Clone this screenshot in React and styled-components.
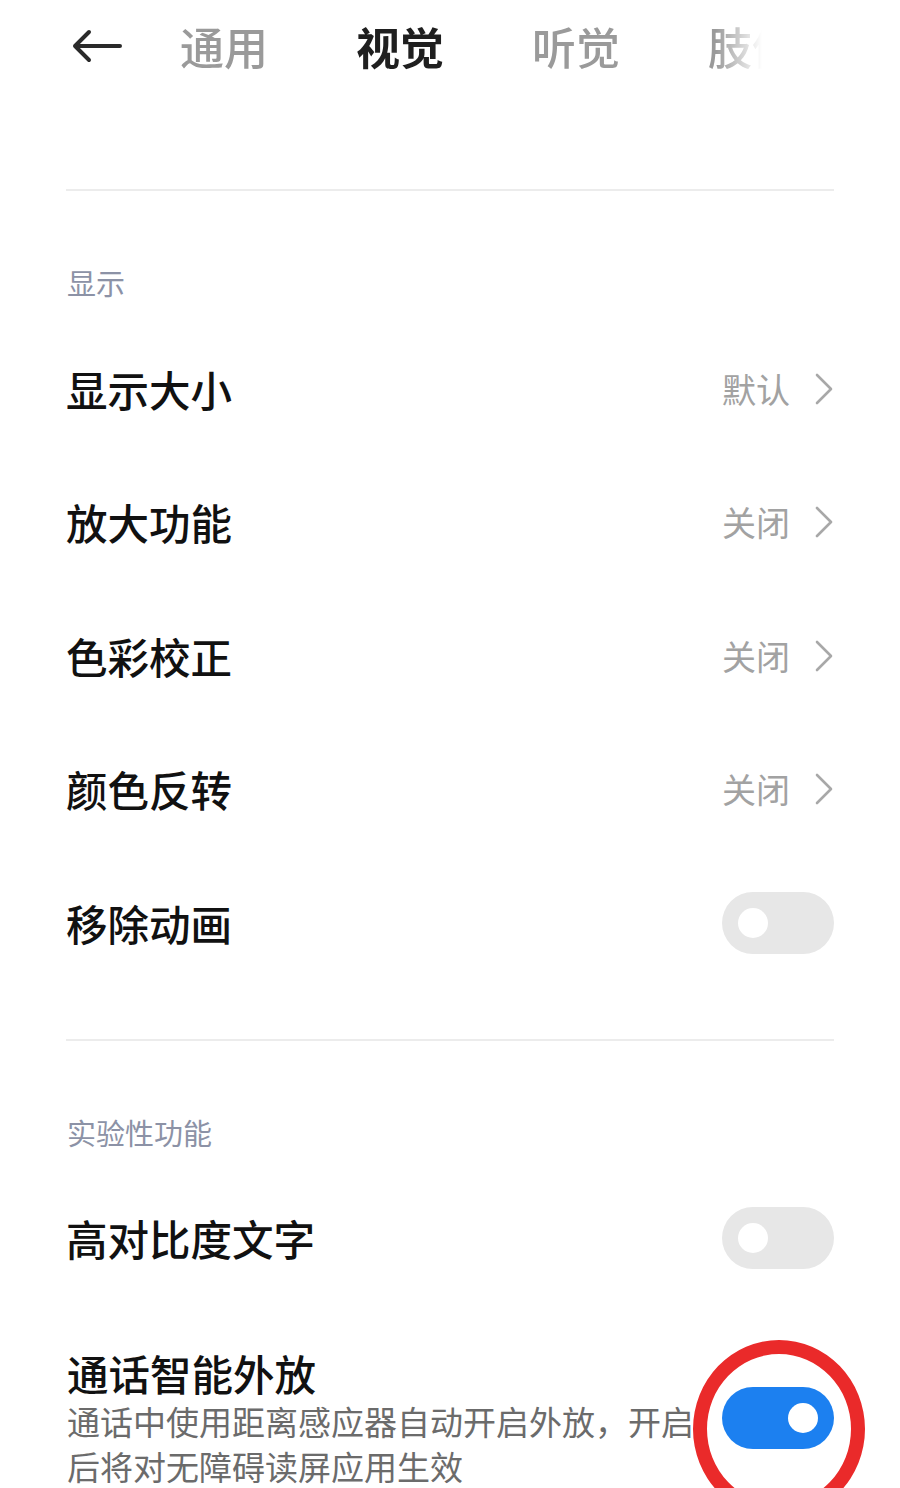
import React from 'react';
import styled, { createGlobalStyle } from 'styled-components';

const GlobalStyle = createGlobalStyle`
  html, body {
    margin: 0;
    padding: 0;
    background: #ffffff;
  }
  body {
    font-family: "Noto Sans CJK SC", "Noto Sans", sans-serif;
    color: #111;
  }
`;

const tabs = ['通用', '视觉', '听觉', '肢体'];

const displayRows = [
  { title: '显示大小', value: '默认' },
  { title: '放大功能', value: '关闭' },
  { title: '色彩校正', value: '关闭' },
  { title: '颜色反转', value: '关闭' },
  { title: '移除动画', toggle: false },
];

const Page = styled.div`
  width: 900px;
  height: 1488px;
  overflow: hidden;
  background: #fff;
`;

const Header = styled.div`
  display: flex;
  align-items: center;
  height: 92px;
  padding-left: 72px;
`;

const BackButton = styled.div`
  display: flex;
  align-items: center;
  width: 108px;
  height: 40px;
`;

const TabStrip = styled.div`
  display: flex;
  gap: 88px;
  width: 582px;
  padding: 8px 0;
  overflow: hidden;
  white-space: nowrap;
  -webkit-mask-image: linear-gradient(to right, #000 92%, transparent 100%);
  mask-image: linear-gradient(to right, #000 92%, transparent 100%);
`;

const Tab = styled.span`
  font-size: 44px;
  line-height: 60px;
  font-weight: ${p => (p.$active ? 700 : 500)};
  color: ${p => (p.$active ? '#1f1f1f' : '#9a9a9a')};
  flex-shrink: 0;
`;

const Content = styled.div`
  padding: 0 66px;
`;

const Divider = styled.div`
  height: 2px;
  background: #ececec;
  margin-top: ${p => p.$top}px;
`;

const SectionTitle = styled.div`
  padding: 71px 0 20px 1px;
  font-size: 29px;
  line-height: 40px;
  color: #8c92a6;
`;

const Row = styled.div`
  display: flex;
  align-items: center;
  justify-content: space-between;
  height: 133.5px;
`;

const TallRow = styled.div`
  display: flex;
  align-items: center;
  justify-content: space-between;
  padding-top: 42px;
`;

const RowText = styled.div`
  width: 640px;
  padding-left: 1px;
`;

const RowTitle = styled.div`
  font-size: 41.5px;
  line-height: 52px;
  font-weight: 500;
  color: #111;
`;

const RowSub = styled.div`
  font-size: 33px;
  line-height: 45px;
  color: #6b6b6b;
`;

const Value = styled.div`
  display: flex;
  align-items: center;
  gap: 24px;
  font-size: 34px;
  line-height: 40px;
  color: #a2a2a2;
`;

const Switch = styled.div`
  position: relative;
  flex-shrink: 0;
  width: 112px;
  height: 62px;
  border-radius: 31px;
  background: ${p => (p.$on ? '#1c80f0' : '#e7e7e7')};
`;

const Knob = styled.span`
  position: absolute;
  top: 16px;
  left: ${p => (p.$on ? '66px' : '16px')};
  width: 30px;
  height: 30px;
  border-radius: 50%;
  background: #fff;
`;

const Highlight = styled.span`
  position: absolute;
  left: -29px;
  top: -47px;
  width: 172px;
  height: 178px;
  box-sizing: border-box;
  border: 14px solid #ea2a2a;
  border-radius: 50%;
  pointer-events: none;
`;

function BackArrow() {
  return (
    <svg width="50" height="34" viewBox="0 0 50 34" fill="none">
      <path d="M3 17H48M17 3L3 17L17 31" stroke="#2a2a2a" strokeWidth="4" strokeLinecap="round" strokeLinejoin="round" />
    </svg>
  );
}

function Chevron() {
  return (
    <svg width="20" height="32" viewBox="0 0 20 32" fill="none">
      <path d="M3 2L17 16L3 30" stroke="#a8a8a8" strokeWidth="2.6" strokeLinecap="round" strokeLinejoin="round" />
    </svg>
  );
}

function Toggle({ on, marked }) {
  return (
    <Switch $on={on}>
      <Knob $on={on} />
      {marked && <Highlight />}
    </Switch>
  );
}

export default function App() {
  return (
    <Page>
      <GlobalStyle />
      <Header>
        <BackButton>
          <BackArrow />
        </BackButton>
        <TabStrip>
          {tabs.map(t => (
            <Tab key={t} $active={t === '视觉'}>{t}</Tab>
          ))}
        </TabStrip>
      </Header>

      <Content>
        <Divider $top={97} />
        <SectionTitle>显示</SectionTitle>
        {displayRows.map(row => (
          <Row key={row.title}>
            <RowTitle>{row.title}</RowTitle>
            {row.value ? (
              <Value>
                {row.value}
                <Chevron />
              </Value>
            ) : (
              <Toggle on={row.toggle} />
            )}
          </Row>
        ))}

        <Divider $top={49} />
        <SectionTitle>实验性功能</SectionTitle>
        <Row>
          <RowTitle>高对比度文字</RowTitle>
          <Toggle on={false} />
        </Row>
        <TallRow>
          <RowText>
            <RowTitle>通话智能外放</RowTitle>
            <RowSub>通话中使用距离感应器自动开启外放，开启后将对无障碍读屏应用生效</RowSub>
          </RowText>
          <Toggle on marked />
        </TallRow>
      </Content>
    </Page>
  );
}
